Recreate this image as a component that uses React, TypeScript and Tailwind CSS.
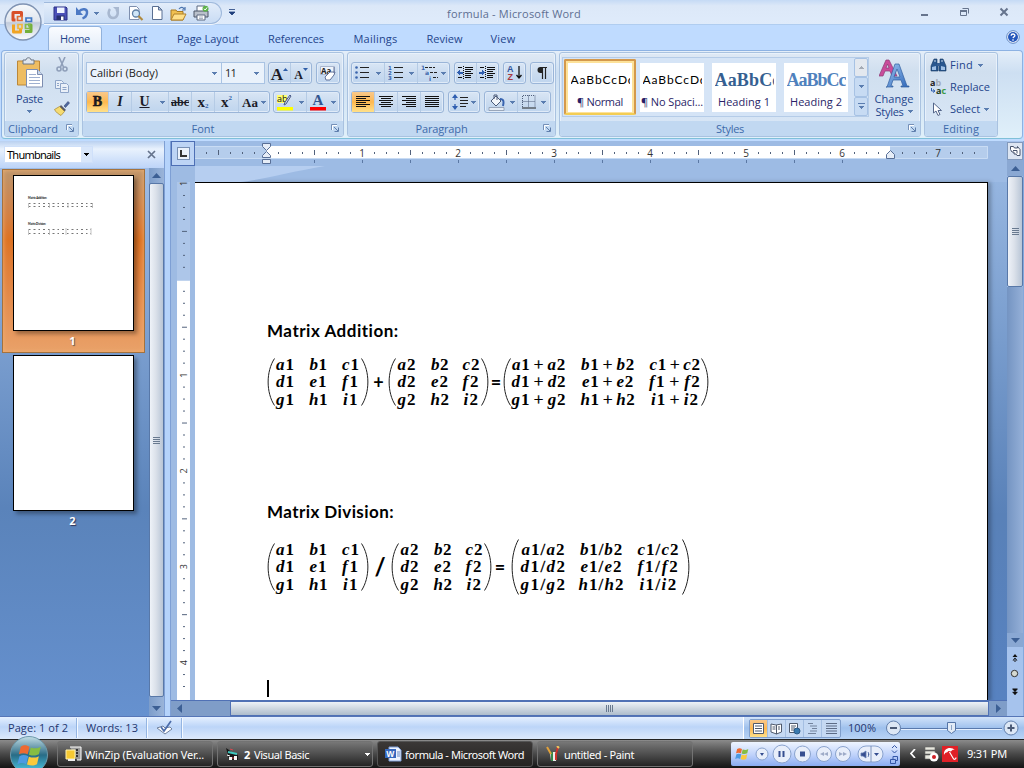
import React, { useLayoutEffect, useRef, useState } from "react";

const UI = "font-['Open_Sans','Noto_Sans',sans-serif]";
const TAHOMA = "font-['Noto_Sans','Open_Sans',sans-serif]";

/* Text run whose tracking is adjusted so that it spans a given width. */
function T({ w, c = "", children }: { w: number; c?: string; children: string }) {
  const ref = useRef<HTMLSpanElement>(null);
  const [ls, setLs] = useState(0);
  useLayoutEffect(() => {
    if (ref.current) setLs((w - ref.current.getBoundingClientRect().width) / children.length);
  }, []);
  return (
    <span ref={ref} className={`inline-block whitespace-pre ${c}`} style={{ letterSpacing: ls }}>
      {children}
    </span>
  );
}

function Down({ c = "#5a7db0", className = "" }: { c?: string; className?: string }) {
  return (
    <svg width="5" height="3" viewBox="0 0 5 3" className={`shrink-0 ${className}`} shapeRendering="crispEdges">
      <path d="M0 0h5v1h-1v1h-1v1h-1v-1h-1v-1h-1z" fill={c} />
    </svg>
  );
}

function Launcher() {
  return (
    <svg width="9" height="9" viewBox="0 0 9 9" fill="none">
      <path d="M.5 6V.5H6" stroke="#7590b8" />
      <path d="M3 3l4 4M7.5 3.5v4h-4" stroke="#5f7eac" />
      <path d="M1.5 6V1.5H6" stroke="#fff" />
    </svg>
  );
}

function Group({ w, label, lw, launch, shift = "pr-[4px]", children }: { w: string; label: string; lw: number; launch?: boolean; shift?: string; children: React.ReactNode }) {
  return (
    <div className={`${w} flex h-[85px] shrink-0 flex-col overflow-hidden rounded-[3px] border border-[#a9c2e0] bg-linear-to-b from-[#dfe9f5] via-[#d0dfef] via-[22%] to-[#d9e7f7] shadow-[inset_0_0_0_1px_#e8f1fb]`}>
      <div className="h-[68px]">{children}</div>
      <div className="flex h-[15px] items-center bg-[#c1d8f1] text-[11px] leading-none text-[#3e6aaa]">
        <div className={`flex-1 text-center ${launch ? shift : ""}`}>
          <T w={lw}>{label}</T>
        </div>
        {launch && <div className="mr-[3px]"><Launcher /></div>}
      </div>
    </div>
  );
}

const BOX = "flex h-[22px] shrink-0 items-stretch rounded-[3px] border border-[#9ab5d8] bg-linear-to-b from-[#d9e6f5] via-[#cbdcf0] via-[48%] to-[#bfd5ee] shadow-[inset_0_0_0_1px_#e0ebf8]";
const CELL = "flex items-center justify-center border-r border-[#b5cbe5] last:border-r-0";
const HOT = "bg-linear-to-b from-[#f9c88a] via-[#fdb84e] to-[#ffe18a]";

function Lines({ rows }: { rows: number[][] }) {
  return (
    <svg width="16" height="14" viewBox="0 0 16 14" shapeRendering="crispEdges">
      {rows.map(([x, w], i) => (
        <rect key={i} x={x} y={1 + i * 2} width={w} height="1" fill="#111" />
      ))}
    </svg>
  );
}

function SaveIcon() {
  return (
    <svg width="15" height="15" viewBox="0 0 15 15">
      <path d="M1 1h12l1 1v12H1z" fill="#4b50b8" stroke="#2b3085" />
      <path d="M4 1.5h7.5V7H4z" fill="#eef3ff" />
      <path d="M3.5 9.5h8V14h-8z" fill="#27306f" />
      <path d="M8 10.5h2.5V14H8z" fill="#fff" />
    </svg>
  );
}
function UndoIcon({ c, flip }: { c: string; flip?: boolean }) {
  return flip ? (
    <svg width="13" height="14" viewBox="0 0 13 14" fill="none">
      <path d="M3 3C.5 6 1.500 12 6 12s6-5.500 3.500-8.500" stroke={c} strokeWidth="2.600" />
      <path d="M6 1h6v6z" fill={c} />
    </svg>
  ) : (
    <svg width="13" height="14" viewBox="0 0 13 14" fill="none">
      <path d="M3 5.500C6 2 11.500 2.500 11 7c-.3 2.500-2 4.500-4.500 5.500" stroke={c} strokeWidth="2.400" />
      <path d="M0 1v8h7z" fill={c} />
    </svg>
  );
}
function PageIcon() {
  return (
    <svg width="12" height="14" viewBox="0 0 12 14">
      <path d="M1.500.5h6l3.500 3.500v9.500H1.500z" fill="#fff" stroke="#596f92" />
      <path d="M7.500.5V4H11z" fill="#b8c9e4" stroke="#596f92" />
    </svg>
  );
}
function PreviewIcon() {
  return (
    <svg width="16" height="15" viewBox="0 0 16 15">
      <path d="M1.500.5h7L11 3v10.500H1.500z" fill="#fff" stroke="#7e8fae" />
      <circle cx="8" cy="7.500" r="3.500" fill="#cfe6f8" stroke="#5e7fa5" strokeWidth="1.300" />
      <path d="M10.500 10l4 4" stroke="#b08a3e" strokeWidth="2.200" />
    </svg>
  );
}
function FolderIcon() {
  return (
    <svg width="17" height="15" viewBox="0 0 17 15">
      <path d="M1 4h5l1 1.500h6V14H1z" fill="#f0c050" stroke="#a87a24" />
      <path d="M1 14l3-6h12l-3 6z" fill="#ffe08a" stroke="#b0812b" />
      <path d="M9 3c2-2.500 4-2 5 0m1-2v3h-3" fill="none" stroke="#4a73ad" strokeWidth="1.200" />
    </svg>
  );
}
function PrintIcon() {
  return (
    <svg width="16" height="16" viewBox="0 0 16 16">
      <path d="M4 1h8v6H4z" fill="#fff" stroke="#5a6880" />
      <path d="M1 6h14v6H1z" fill="#b9c0cb" stroke="#4c5668" />
      <path d="M4 10h8v5H4z" fill="#fff" stroke="#5a6880" />
      <circle cx="12.500" cy="3.700" r="3" fill="#5db24b" />
      <path d="M11 3.700l1.200 1.300 2-2.600" fill="none" stroke="#fff" />
      <path d="M6 12h4M6 13.500h4" stroke="#8895aa" strokeWidth=".7" />
    </svg>
  );
}

function OfficeButton() {
  return (
    <svg width="42" height="42" viewBox="0 0 42 42" className="absolute left-[2px] top-px">
      <defs>
        <linearGradient id="orb" x1="0" y1="0" x2="0" y2="1">
          <stop offset="0" stopColor="#f8fafc" />
          <stop offset=".48" stopColor="#dfe5ee" />
          <stop offset=".52" stopColor="#c2ccdc" />
          <stop offset="1" stopColor="#fdfeff" />
        </linearGradient>
      </defs>
      <circle cx="21" cy="21" r="18" fill="url(#orb)" stroke="#7f93b3" strokeWidth="1.400" />
      <g fill="none" strokeWidth="3" strokeLinejoin="round">
        <path d="M13.500 19h-2.500v-7.500h8.500V16" stroke="#d8502a" />
        <path d="M11.500 23.500V31h7v-3.500" stroke="#f0a424" />
        <path d="M23 30.500h6v-6.500h-3" stroke="#74b03c" />
      </g>
      <g fill="none" strokeWidth="1.700">
        <path d="M15.500 15.500h4.500v4h-4.500z" stroke="#e06c34" />
        <path d="M24 17h5.500v3.500H24z" stroke="#3f78c4" />
        <path d="M16 23.500h4v4h-4z" stroke="#f3b63b" />
        <path d="M23.500 23.500h4v4h-4z" stroke="#86bb4c" />
      </g>
    </svg>
  );
}

function TitleBar() {
  return (
    <div className="flex h-6 items-center bg-linear-to-b from-[#c5daf5] via-[#dce8f8] via-[24%] to-[#dfebfb]">
      <div className="ml-[44px] mt-[2px] flex h-[22px] w-[178px] items-center rounded-r-full border border-l-0 border-[#9fb9dc] bg-linear-to-b from-[#e3edfa] to-[#c9dcf4] pl-[9px] shadow-[0_1px_0_#f2f7fd]">
        <div className="w-[23px]"><SaveIcon /></div>
        <div className="w-[18px]"><UndoIcon c="#4c79c4" /></div>
        <div className="w-[13px]"><Down /></div>
        <div className="w-[21px]"><UndoIcon c="#a8b8d0" flip /></div>
        <div className="w-[23px]"><PreviewIcon /></div>
        <div className="w-[19px]"><PageIcon /></div>
        <div className="w-[23px]"><FolderIcon /></div>
        <PrintIcon />
      </div>
      <svg width="6" height="6" viewBox="0 0 6 6" className="ml-[7px]"><path d="M0 .5h6M0 3h6L3 6z" stroke="#1f3f7c" strokeWidth=".8" fill="#1f3f7c" /></svg>
      <div className="ml-[212px] pt-[2px] text-[11px] leading-none text-[#5d6f92]">
        <T w={42}>formula</T>
        <T w={92}> - Microsoft Word</T>
      </div>
      <div className="ml-auto mr-[14px] flex items-center">
        <svg width="90" height="14" viewBox="0 0 90 14" fill="none" stroke="#66748d">
          <path d="M1 10h7" strokeWidth="2" />
          <path d="M42.500 3.500h6v5M40.500 5.500h6v5h-6z" />
          <path d="M40 6h7" strokeWidth="2" />
          <path d="M80.500 3.500l7 7M87.500 3.500l-7 7" strokeWidth="2" />
        </svg>
      </div>
    </div>
  );
}

function Tabs() {
  const tabs: [string, number, string][] = [
    ["Insert", 29, "w-[61px]"],
    ["Page Layout", 62, "w-[90px]"],
    ["References", 56, "w-[86px]"],
    ["Mailings", 44, "w-[73px]"],
    ["Review", 36, "w-[65px]"],
    ["View", 25, "w-[52px]"],
  ];
  return (
    <div className="flex h-[26px] items-end border-t border-[#b0cdf0] bg-[#bfdbff] text-[11px] text-[#24458c]">
      <div className="ml-[48px] flex h-[24px] w-[54px] items-center justify-center rounded-t-[4px] border border-b-0 border-[#92b2dc] bg-linear-to-b from-[#fafcff] to-[#e2ecf8]">
        <T w={30} c="leading-none">Home</T>
      </div>
      {tabs.map(([t, w, box]) => (
        <div key={t} className={`flex h-[24px] items-center justify-center ${box}`}>
          <T w={w} c="leading-none">{t}</T>
        </div>
      ))}
      <svg width="14" height="14" viewBox="0 0 14 14" className="mb-[6px] ml-auto mr-[4px]">
        <circle cx="7" cy="7" r="6.300" fill="#fff" stroke="#5b83c0" />
        <circle cx="7" cy="7" r="5" fill="#2557bb" />
        <path d="M5.200 5.800c0-2.500 3.800-2.300 3.700-.2 0 1.200-1.700 1.200-1.800 2.500M7 9.300v1.400" fill="none" stroke="#fff" strokeWidth="1.300" />
      </svg>
    </div>
  );
}

function Clipboard() {
  return (
    <div className="flex pt-[4px]">
      <div className="flex w-[49px] flex-col items-center text-[11px] text-[#24458c]">
        <svg width="28" height="32" viewBox="0 0 28 32">
          <path d="M1.500 4h22v24h-22z" fill="#eebd62" stroke="#bb8739" />
          <path d="M7 3h3c0-3 5-3 5 0h3v4H7z" fill="#dfe5ec" stroke="#6d7684" />
          <path d="M10.500 12.500h11l5 5V30h-16z" fill="#fff" stroke="#7d8db0" />
          <path d="M21.500 12.500v5h5" fill="#c9d7ec" stroke="#7d8db0" />
          <path d="M13 17.500h7M13 20.500h11M13 23.500h11M13 26.500h11" stroke="#9fb0d0" />
        </svg>
        <T w={27} c="mt-[2px] leading-[15px]">Paste</T>
        <Down className="mt-[4px]" />
      </div>
      <div className="flex flex-col items-center">
        <svg width="16" height="16" viewBox="0 0 16 16" fill="none" stroke="#8f9fb9" strokeWidth="1.600">
          <path d="M5 0l4.500 10M11 0L6.500 10" />
          <circle cx="5" cy="12" r="2" /><circle cx="11" cy="12" r="2" />
        </svg>
        <svg width="16" height="15" viewBox="0 0 16 15" className="mt-[6px]" fill="#eaf0f8" stroke="#8ea5c8">
          <path d="M1.500 1.500h6l2 2v6h-8z" /><path d="M6.500 4.500h6l2 2v7h-8z" />
          <path d="M3 4.500h2M3 6.500h2M8.500 8.500h4M8.500 10.500h4" />
        </svg>
        <svg width="16" height="15" viewBox="0 0 16 15" className="mt-[7px]">
          <path d="M10 5l4-4.500 1.500 1.500-4 4.500z" fill="#4e67a0" stroke="#35466f" strokeWidth=".6" />
          <path d="M7 4l5 5-2 1.500L5.500 6z" fill="#5b5b66" />
          <path d="M5.500 5.500l5 5L7 14.500C4.500 13 2 11.500.5 8.500z" fill="#f5db72" stroke="#a68428" strokeWidth=".7" />
        </svg>
      </div>
    </div>
  );
}

const SERIF = "font-['Liberation_Serif',serif] leading-none text-[#1c1c28]";

function FontGroup() {
  return (
    <div className="flex flex-col gap-[7px] pl-[3px] pt-[9px]">
      <div className="flex">
        <div className="flex h-[22px] w-[136px] items-center justify-between border border-[#a9c3e3] bg-[#eaf2fb] pl-[3px] pr-[4px] text-[11px] text-[#222]">
          <T w={68}>Calibri (Body)</T>
          <Down />
        </div>
        <div className="flex h-[22px] w-[43px] items-center justify-between border border-l-0 border-[#a9c3e3] bg-[#eaf2fb] pl-[3px] pr-[5px] text-[11px] text-[#222]">
          <T w={11}>11</T>
          <Down />
        </div>
        <div className={`${BOX} ml-[3px] w-[44px]`}>
          <div className={`${CELL} ${SERIF} w-[22px] text-[17px] font-bold`}><span className="pt-[3px]">A</span><svg width="5" height="3" className="mb-[8px]"><path d="M0 3h5L2.500 0z" fill="#2f5ea8" /></svg></div>
          <div className={`${CELL} ${SERIF} w-[20px] text-[12px] font-bold`}><span className="pt-1">A</span><svg width="5" height="3" className="mb-[8px]"><path d="M0 0h5L2.500 3z" fill="#2f5ea8" /></svg></div>
        </div>
        <div className={`${BOX} ml-[4px] w-[24px]`}>
          <svg width="22" height="20" viewBox="0 0 22 20">
            <path d="M3.500 3.500h14v8h-14z" fill="#eef3fa" stroke="#a9b7cf" />
            <text x="4" y="10.500" fontSize="8" fontWeight="bold" fontFamily="Open Sans" fill="#222">Aa</text>
            <path d="M8 14l5-5 5 0-1 3-4 5H9z" fill="#fff" stroke="#62729a" />
            <path d="M17 4v6" stroke="#62729a" />
          </svg>
        </div>
      </div>
      <div className="flex">
        <div className={`${BOX} w-[184px]`}>
          <div className={`${CELL} ${SERIF} ${HOT} w-[22px] text-[14px] font-bold [-webkit-text-stroke:0.5px_#111]`}>B</div>
          <div className={`${CELL} ${SERIF} w-[23px] text-[14px] font-bold italic`}>I</div>
          <div className={`${CELL} ${SERIF} w-[37px] gap-[10px] pl-[4px] text-[14px] font-bold`}><span className="underline">U</span><Down /></div>
          <div className={`${CELL} ${SERIF} w-[23px] text-[12px] font-bold line-through`}>abc</div>
          <div className={`${CELL} ${SERIF} w-[23px] text-[15px] font-bold`}>x<span className="pt-2 text-[7px] text-[#2f5ea8]">2</span></div>
          <div className={`${CELL} ${SERIF} w-[24px] text-[15px] font-bold`}>x<span className="pb-2 text-[7px] text-[#2f5ea8]">2</span></div>
          <div className={`${CELL} ${SERIF} w-[30px] gap-[3px] text-[13px] font-bold`}>Aa<Down /></div>
        </div>
        <div className={`${BOX} ml-[3px] w-[67px]`}>
          <div className={`${CELL} w-[33px] gap-[5px]`}>
            <svg width="18" height="18" viewBox="0 0 18 18">
              <path d="M1 2h10v8H1z" fill="#ffff70" />
              <text x="1" y="8.500" fontSize="9" fontFamily="Open Sans" fill="#111">ab</text>
              <path d="M15 3l-5 8-2 1 1-3 5-7z" fill="#cdd6ea" stroke="#4b5b88" />
              <path d="M1 14h16v3.500H1z" fill="#ff0" />
            </svg>
            <Down />
          </div>
          <div className={`${CELL} w-[32px] gap-[5px]`}>
            <svg width="16" height="18" viewBox="0 0 16 18">
              <text x="2.500" y="12" fontSize="15" fontWeight="bold" fontFamily="Liberation Serif" fill="#32558f">A</text>
              <path d="M0 14h16v3.500H0z" fill="#f00" />
            </svg>
            <Down />
          </div>
        </div>
      </div>
    </div>
  );
}

function ParaGroup() {
  const full = [0, 1, 2, 3, 4, 5];
  return (
    <div className="flex flex-col gap-[7px] pl-[3px] pt-[9px]">
      <div className="flex gap-[4px]">
        <div className={`${BOX} w-[99px]`}>
          <div className={`${CELL} w-[33px] gap-[5px]`}>
            <svg width="16" height="16" viewBox="0 0 16 16">
              <path d="M5 2.500h9M5 7.500h9M5 12.500h9" stroke="#222" />
              <circle cx="1.500" cy="2.500" r="1.300" fill="#3b65ac" /><circle cx="1.500" cy="7.500" r="1.300" fill="#3b65ac" /><circle cx="1.500" cy="12.500" r="1.300" fill="#3b65ac" />
            </svg>
            <Down />
          </div>
          <div className={`${CELL} w-[33px] gap-[5px]`}>
            <svg width="16" height="16" viewBox="0 0 16 16">
              <path d="M6 2.500h9M6 7.500h9M6 12.500h9" stroke="#222" />
              <g fontSize="5.500" fontWeight="bold" fontFamily="DejaVu Sans" fill="#3b65ac"><text x="0" y="4.500">1</text><text x="0" y="9.500">2</text><text x="0" y="14.500">3</text></g>
            </svg>
            <Down />
          </div>
          <div className={`${CELL} w-[31px] gap-[2px]`}>
            <svg width="18" height="16" viewBox="0 0 18 16">
              <path d="M4 2.500h10M9 7.500h8M12 12.500h5" stroke="#222" strokeDasharray="3 1" />
              <g fontSize="6" fontWeight="bold" fontFamily="DejaVu Sans" fill="#3b65ac"><text x="0" y="4.500">1</text><text x="4" y="10">a</text><text x="8" y="15.500">i</text></g>
            </svg>
            <Down />
          </div>
        </div>
        <div className={`${BOX} w-[45px]`}>
          {[0, 1].map((i) => (
            <div key={i} className={`${CELL} w-[22px]`}>
              <svg width="16" height="16" viewBox="0 0 16 16" shapeRendering="crispEdges">
                <path d="M1 2.500h4M8 2.500h8M8 4.500h8M8 6.500h6M8 8.500h8M8 10.500h6M1 12.500h4M8 12.500h6" stroke="#111" />
                <path d="M6.500 1v14" stroke="#111" strokeDasharray="1 1" />
                {i === 0 ? <path d="M0 7.500l3-3v2h3v2H3v2z" fill="#2f5eb0" /> : <path d="M6 7.500l-3-3v2H0v2h3v2z" fill="#2f5eb0" />}
              </svg>
            </div>
          ))}
        </div>
        <div className={`${BOX} w-[23px] justify-center`}>
          <svg width="18" height="20" viewBox="0 0 18 20">
            <g fontSize="9" fontWeight="bold" fontFamily="Liberation Sans"><text x="1" y="9" fill="#32559a">A</text><text x="1.500" y="17" fill="#aa3940">Z</text></g>
            <path d="M13 3v12M10.500 12l2.500 3 2.500-3" stroke="#111" fill="none" strokeWidth="1.300" />
          </svg>
        </div>
        <div className={`${BOX} w-[24px] justify-center`}>
          <svg width="14" height="20" viewBox="0 0 14 20"><path d="M12 4.500H5M7.500 4v12M10.500 4v12" fill="none" stroke="#222" strokeWidth="1.200" /><path d="M7.500 4H5.500a3 3 0 0 0 0 6h2z" fill="#222" /></svg>
        </div>
      </div>
      <div className="flex gap-[4px]">
        <div className={`${BOX} w-[93px]`}>
          <div className={`${CELL} ${HOT} w-[23px]`}><Lines rows={full.map((i) => [1, i % 2 ? 10 : 14])} /></div>
          <div className={`${CELL} w-[23px]`}><Lines rows={full.map((i) => (i % 2 ? [3, 10] : [1, 14]))} /></div>
          <div className={`${CELL} w-[23px]`}><Lines rows={full.map((i) => (i % 2 ? [5, 10] : [1, 14]))} /></div>
          <div className={`${CELL} w-[22px]`}><Lines rows={full.map(() => [1, 14])} /></div>
        </div>
        <div className={`${BOX} w-[32px]`}>
          <div className={`${CELL} w-[30px] gap-[2px]`}>
            <svg width="17" height="16" viewBox="0 0 17 16">
              <path d="M8 3.500h8M8 6.500h8M8 9.500h8M8 12.500h6" stroke="#222" />
              <path d="M3 1v5M3 10v5" stroke="#2f5eb0" strokeWidth="1.300" /><path d="M0 4l3-4 3 4zM0 12l3 4 3-4z" fill="#2f5eb0" />
            </svg>
            <Down />
          </div>
        </div>
        <div className={`${BOX} w-[67px]`}>
          <div className={`${CELL} w-[33px] gap-[5px]`}>
            <svg width="17" height="17" viewBox="0 0 17 17">
              <path d="M3 7l5-5 5 5-5 5z" fill="#f4f7fb" stroke="#4c5b78" /><path d="M6 5V1h3v5" fill="none" stroke="#4c5b78" />
              <path d="M12 5c4 0 4 3 3 7" fill="none" stroke="#3864b0" strokeWidth="2" /><path d="M1 13.500h15v3H1z" fill="#e6edf5" stroke="#8a97ab" strokeWidth=".8" />
            </svg>
            <Down />
          </div>
          <div className={`${CELL} w-[32px] gap-[5px]`}>
            <svg width="14" height="14" viewBox="0 0 14 14"><path d="M.5 12V.5H13M13 .5V12M6.500.5V12M.5 6.500H13" fill="none" stroke="#4f5f7c" strokeDasharray="1 1" /><path d="M0 13h14" stroke="#222" /></svg>
            <Down />
          </div>
        </div>
      </div>
    </div>
  );
}

function StyleCard({ sample, name, heading, hot, nw, sw, color }: { sample: string; name: string; heading?: boolean; hot?: boolean; nw: number; sw: number; color?: string }) {
  return (
    <div className={`flex h-[56px] w-[72px] shrink-0 items-center justify-center rounded-[2px] ${hot ? "border-2 border-[#d4994c] border-b-[#f3cd54] bg-[#fde29a]" : ""}`}>
      <div className="flex h-[49px] w-[64px] flex-col items-center overflow-hidden bg-white">
        <div className={`mt-[8px] h-[17px] w-[59px] overflow-hidden whitespace-nowrap leading-[18px] ${heading ? "font-['Liberation_Serif',serif] text-[18px] font-bold" : "font-['Lato',sans-serif] text-[12px] text-black"} ${color ?? ""}`}>
          <T w={sw}>{sample}</T>
        </div>
        <T w={nw} c="mt-[6px] text-[11px] leading-[15px] text-[#2a1f68]">{name}</T>
      </div>
    </div>
  );
}

function StylesGroup() {
  return (
    <div className="flex pl-[2px] pt-[4px]">
      <div className="flex h-[60px] w-[307px] items-center border border-[#b5cce8] bg-[#d5e4f6] pl-[1px]">
        <StyleCard sample="AaBbCcDd" name="¶ Normal" hot nw={46} sw={65} />
        <StyleCard sample="AaBbCcDd" name="¶ No Spaci..." nw={62} sw={65} />
        <StyleCard sample="AaBbCc" name="Heading 1" heading nw={52} sw={66} color="text-[#365f91]" />
        <StyleCard sample="AaBbCc" name="Heading 2" heading nw={52} sw={59} color="text-[#4f81bd]" />
        <div className="ml-[2px] flex h-[58px] w-[14px] flex-col">
          {[0, 1, 2].map((i) => (
            <div key={i} className={`flex flex-1 flex-col items-center justify-center gap-[2px] rounded-[2px] border border-[#a7c2e4] ${i ? "bg-[#c7dbf3]" : "bg-[#e3e8ef]"}`}>
              {i === 2 && <div className="h-px w-[7px] bg-[#5a7db0]" />}
              <Down c={i ? "#5a7db0" : "#a5abb5"} className={i ? "" : "rotate-180"} />
            </div>
          ))}
        </div>
      </div>
      <div className="flex w-[50px] flex-col items-center pt-[2px] text-[11px] text-[#24458c]">
        <svg width="31" height="31" viewBox="0 0 31 31">
          <defs><linearGradient id="aa" x1="0" y1="0" x2="1" y2="1"><stop offset="0" stopColor="#9cc4f2" /><stop offset="1" stopColor="#2f67b9" /></linearGradient></defs>
          <path fillRule="evenodd" d="M0 17L7 1h3l8 16h-5l-2-5H6l-2 5zM7 9h3L8.500 5z" fill="#c94c9b" stroke="#8d3974" strokeWidth=".7" />
          <path fillRule="evenodd" d="M7 28h1l8-23h4l8 22h2v1h-8v-1h2l-2-6h-8l-2 6h2v1zM15 18h6l-3-8z" fill="url(#aa)" stroke="#315f9f" strokeWidth=".7" />
        </svg>
        <T w={39} c="mt-[2px] leading-[13px]">Change</T>
        <div className="flex items-center gap-[4px]"><T w={28} c="leading-[13px]">Styles</T><Down /></div>
      </div>
    </div>
  );
}

function EditingGroup() {
  return (
    <div className="flex flex-col pl-[5px] pt-px text-[11px] text-[#24458c]">
      <div className="flex h-[22px] items-center">
        <svg width="17" height="15" viewBox="0 0 17 15" className="mr-[3px]">
          <path d="M4 1h3v5l1 1v6H1V8zM10 1h3l3 7v5H9V7l1-1z" fill="#29578f" stroke="#183961" strokeWidth=".6" />
          <path d="M2 9l4-1v4H2zM11 8l4 1v3h-4z" fill="#9fc0e6" /><path d="M7 5h3v3H7z" fill="#345d92" /><path d="M4 3h2M11 3h2" stroke="#cde" />
        </svg>
        <T w={23}>Find</T><Down className="ml-[5px]" />
      </div>
      <div className="flex h-[22px] items-center">
        <svg width="17" height="16" viewBox="0 0 17 16" className="mr-[3px]">
          <g fontSize="9" fontWeight="bold" fontFamily="Open Sans"><text x="0" y="6.500"><tspan fill="#222">a</tspan><tspan fill="#a3abb8">b</tspan></text><text x="6" y="14.500"><tspan fill="#1d3d22">a</tspan><tspan fill="#3d9a46">c</tspan></text></g>
          <path d="M1.500 9v3h3M3 10.500L5 12l-2 1.500" fill="none" stroke="#2f5eb0" />
        </svg>
        <T w={40}>Replace</T>
      </div>
      <div className="flex h-[22px] items-center">
        <svg width="17" height="15" viewBox="0 0 17 15" className="mr-[3px]"><path d="M3.500 1v10l2.500-2 2 4.500 2-1-2-4h3.500z" fill="#fff" stroke="#55678b" /></svg>
        <T w={30}>Select</T><Down className="ml-[4px]" />
      </div>
    </div>
  );
}

function Ribbon() {
  return (
    <div className="h-[91px] bg-[#bfdbff] px-px pb-[1px]">
      <div className="flex h-[89px] gap-[3px] rounded-[4px] border border-[#8db2e3] border-b-[#7fc0d8] bg-linear-to-b from-[#e4eef9] via-[#cddff2] via-[25%] to-[#e0f0fa] pl-[2px] pt-px">
        <Group w="w-[75px]" label="Clipboard" lw={50} launch shift="pr-[5px]"><Clipboard /></Group>
        <Group w="w-[262px]" label="Font" lw={23} launch shift="pr-[8px]"><FontGroup /></Group>
        <Group w="w-[209px]" label="Paragraph" lw={52} launch shift="pr-[8px]"><ParaGroup /></Group>
        <Group w="w-[362px]" label="Styles" lw={28} launch shift="pr-[8px]"><StylesGroup /></Group>
        <Group w="w-[74px]" label="Editing" lw={36}><EditingGroup /></Group>
      </div>
    </div>
  );
}

function Arrow({ dir, c = "#3c5f94" }: { dir: "up" | "down" | "left" | "right"; c?: string }) {
  const d = { up: "M0 7h9L4.500 2z", down: "M0 2h9L4.500 7z", left: "M7 0v9L2 4.500z", right: "M2 0v9l5-4.500z" }[dir];
  return <svg width="9" height="9" viewBox="0 0 9 9"><path d={d} fill={c} /></svg>;
}

const VTHUMB = "flex items-center justify-center rounded-[2px] border border-[#5878a8] bg-linear-to-r from-[#eef2f8] via-[#dbe1ea] via-[45%] to-[#b8c5d6]";
const PAPER = "border border-black bg-white shadow-[3px_3px_4px_#0005]";

function MiniLines() {
  return (
    <svg width="119" height="60" viewBox="0 0 119 60" className="block">
      <g fontFamily="Lato" fontWeight="bold" fontSize="2.700" fill="#000"><text x="14" y="23" textLength="19">Matrix Addition:</text><text x="14" y="49" textLength="18">Matrix Division:</text></g>
      <g stroke="#777" strokeWidth="1" strokeDasharray="1.500 3 2 3">
        <path d="M15 27.500h64M15 30.500h64" />
        <path d="M15 53.500h62M15 57.500h62" />
      </g>
      <g stroke="#aaa" strokeWidth=".7"><path d="M14.500 27v5M35.500 27v5M54 27v5M78.500 27v5M14.500 53v6M35.500 53v6M52 52v7M77 52v7" /></g>
    </svg>
  );
}

function Thumbnails() {
  return (
    <div className="flex h-full w-[164px] flex-col">
      <div className="flex h-[27px] items-center bg-linear-to-b from-[#b9d0f0] via-[#e9f2fd] via-[30%] to-[#bdd4f8] pl-[4px] text-[11px]">
        <div className={`${TAHOMA} flex h-[17px] w-[89px] items-center justify-between border border-[#cfe0fa] bg-white pb-px pl-[2px] text-black`}>
          <T w={53} c="leading-none">Thumbnails</T>
          <div className="flex h-[15px] w-[11px] items-center justify-center bg-[#d8e6fa]"><Down c="#000" /></div>
        </div>
        <svg width="9" height="9" viewBox="0 0 9 9" className="ml-[54px]"><path d="M1 1l7 7M8 1L1 8" stroke="#65738c" strokeWidth="1.700" /></svg>
      </div>
      <div className="flex flex-1">
        <div className={`${UI} w-[149px] bg-linear-to-b from-[#9ebce6] via-[#5a83ba] via-[62%] to-[#6691cf] pl-[2px] pt-px text-center text-[11px] font-bold text-white`}>
          <div className="h-[184px] w-[143px] border border-[#a4723e] bg-linear-to-b from-[#bc946b] via-[#dd7222] via-[38%] to-[#e9a169] pl-[10px] pt-[5px] shadow-[inset_0_0_5px_#f0b070]">
            <div className={`${PAPER} h-[156px] w-[121px]`}><MiniLines /></div>
            <div className="w-[119px] pt-[4px] leading-[12px] [text-shadow:1px_1px_1px_#555]">1</div>
          </div>
          <div className={`${PAPER} ml-[11px] mt-[2px] h-[156px] w-[121px]`} />
          <div className="ml-[11px] w-[119px] pt-[4px] leading-[12px] [text-shadow:1px_1px_1px_#335]">2</div>
        </div>
        <div className="flex w-[15px] flex-col bg-linear-to-r from-[#7d9dca] to-[#9ab4d9]">
          <div className="flex h-[15px] items-center justify-center"><Arrow dir="up" /></div>
          <div className={`${VTHUMB} h-[514px]`}>
            <div className="flex flex-col gap-px">{[0, 1, 2, 3].map((i) => <div key={i} className="h-px w-[7px] bg-[#68798f]" />)}</div>
          </div>
          <div className="flex flex-1 items-center justify-center pt-1"><Arrow dir="down" /></div>
        </div>
      </div>
    </div>
  );
}

function HRuler() {
  const ticks: React.ReactNode[] = [];
  for (let i = -5; i <= 59; i++) {
    const x = 71.5 + i * 12;
    if (i === 0 || i === 52) continue;
    if (i % 8 === 0) ticks.push(<text key={i} x={x - 0.5} y="10.500" fontSize="10" textAnchor="middle" fontFamily="Open Sans" fill="#333">{i / 8}</text>);
    else ticks.push(<path key={i} d={i % 4 === 0 ? `M${x} 4v5` : `M${x} 6v2`} stroke="#52627c" />);
  }
  return (
    <svg width="793" height="24" viewBox="0 -5 793 24" className="block">
      <path d="M0 0h793v12H0z" fill="#b5cdec" /><path d="M0 .5h792.500v12H0" fill="none" stroke="#c9dcf4" />
      <path d="M71 0h624v12H71z" fill="#fff" />
      {ticks}
      {Array.from({ length: 12 }, (_, i) => <path key={i} d={`M${119.500 + i * 48} 14v3`} stroke="#5b78a4" />)}
      <g fill="#e6edf7" stroke="#586f97">
        <path d="M67.500-2.500h8v3l-4 4-4-4zM67.500 11.500v-2l4-4 4 4v2zM67.500 13.500h8v4h-8z" />
        <path d="M691.500 12.500v-4l4-4 4 4v4z" />
      </g>
    </svg>
  );
}

function VRuler() {
  const ticks: React.ReactNode[] = [];
  for (let i = -8; i <= 34; i++) {
    const y = 97.5 + i * 12;
    if (i === 0) continue;
    if (i % 8 === 0) ticks.push(<text key={i} transform={`translate(10 ${y}) rotate(-90)`} fontSize="9" textAnchor="middle" fontFamily="Open Sans" fill="#333">{Math.abs(i / 8)}</text>);
    else ticks.push(<path key={i} d={i % 4 === 0 ? `M5 ${y}h5` : `M6 ${y}h2`} stroke="#52627c" />);
  }
  return (
    <svg width="13" height="519" viewBox="0 0 13 519" className="ml-[6px] mt-[16px] block">
      <path d="M0 0h13v519H0z" fill="#fff" /><path d="M0 0h13v99H0z" fill="#adc6e9" />{ticks}
    </svg>
  );
}

function Paren({ h, right }: { h: number; right?: boolean }) {
  return (
    <svg width="8" height={h} viewBox={`0 0 8 ${h}`} className={`shrink-0 ${right ? "-scale-x-100" : ""}`}>
      <path d={`M7.500 .5C-1 ${h * 0.28} -1 ${h * 0.72} 7.500 ${h - 0.5}`} fill="none" stroke="#222" />
    </svg>
  );
}

function Matrix({ cols, cells, w, h = 48 }: { cols: string; cells: string[]; w: number[]; h?: number }) {
  return (
    <div className="flex items-center">
      <Paren h={h} />
      <div className={`grid ${cols} auto-rows-[17.5px] font-['Liberation_Serif',serif] text-[17px] font-bold leading-[18px] text-black`}>
        {cells.map((s, i) => (
          <div key={i} className="flex justify-center">
            <MathRun s={s} w={w[i]} />
          </div>
        ))}
      </div>
      <Paren h={h} right />
    </div>
  );
}

/* Variables are slanted, digits and operators stay upright. */
function MathRun({ s, w }: { s: string; w: number }) {
  const ref = useRef<HTMLSpanElement>(null);
  const [ls, setLs] = useState(0);
  useLayoutEffect(() => {
    if (ref.current) setLs((w - ref.current.getBoundingClientRect().width) / s.length);
  }, []);
  return (
    <span ref={ref} className="whitespace-pre" style={{ letterSpacing: ls }}>
      {s.split("").map((ch, i) => <span key={i} className={/[a-z]/.test(ch) ? "italic" : ch === " " ? "text-[10px]" : ch === "/" || ch === "+" ? "font-normal [-webkit-text-stroke:0.4px_#000]" : ""}>{ch}</span>)}
    </span>
  );
}

const one = ["a1", "b1", "c1", "d1", "e1", "f1", "g1", "h1", "i1"];
const two = one.map((s) => s[0] + "2");
const w1 = [19, 18, 18, 19, 18, 18, 19, 19, 16];
const wSum = [54, 54, 51, 55, 52, 52, 55, 55, 48];
const wDiv = [44, 43, 42, 46, 42, 42, 46, 46, 38];
const LATO = "font-['Lato',sans-serif] font-bold text-black";

function Page() {
  return (
    <div className="h-[519px] w-[793px] overflow-hidden border-r border-t border-black bg-white pl-[72px] shadow-[3px_0_4px_#0004]">
      <div className={`${LATO} mt-[138px] h-[20px] text-[17px] leading-[20px]`}><T w={132}>Matrix Addition:</T></div>
      <div className="mt-[17px] flex h-[48px] items-center">
        <Matrix cols="grid-cols-[21px_45px_20px]" cells={one} w={w1} />
        <div className={`${LATO} w-[19px] text-center text-[18px]`}>+</div>
        <Matrix cols="grid-cols-[22px_44px_19px]" cells={two} w={w1} />
        <div className={`${LATO} w-[14px] text-center text-[18px]`}>=</div>
        <Matrix cols="grid-cols-[56px_82px_52px]" cells={one.map((s, i) => `${s} + ${two[i]}`)} w={wSum} />
      </div>
      <div className={`${LATO} mt-[96px] h-[20px] text-[17px] leading-[20px]`}><T w={127}>Matrix Division:</T></div>
      <div className="mt-[17px] flex h-[56px] items-center">
        <Matrix cols="grid-cols-[21px_45px_20px]" cells={one} w={w1} />
        <div className={`${LATO} w-[22px] text-center text-[24px]`}>/</div>
        <Matrix cols="grid-cols-[22px_44px_19px]" cells={two} w={w1} />
        <div className={`${LATO} w-[19px] pr-[3px] text-center text-[18px]`}>=</div>
        <Matrix cols="grid-cols-[49px_67px_47px]" cells={one.map((s, i) => `${s}/${two[i]}`)} w={wDiv} h={56} />
      </div>
      <div className="mt-[85px] h-[17px] w-[2px] bg-black" />
    </div>
  );
}

function Document() {
  return (
    <div className="flex h-full flex-1 bg-linear-to-b from-[#9dbce5] via-[#5981b8] via-[65%] to-[#5782c1]">
      <div className="flex w-[836px] flex-col">
        <div className="flex h-[559px]">
          <div className="flex w-[24px] flex-col overflow-hidden bg-[#9ebbe3]">
            <div className="flex h-[25px] shrink-0 items-center justify-center border border-[#4d6fb5] bg-[#bdd4f5]">
              <div className="flex h-[13px] w-[13px] items-center justify-center border border-[#7890b5] bg-[#eaf1fb]">
                <svg width="7" height="7"><path d="M1 0v6h6" fill="none" stroke="#333" strokeWidth="2" /></svg>
              </div>
            </div>
            <VRuler />
          </div>
          <div className="w-[812px] overflow-hidden">
            <div className="h-[41px] bg-[#9dbbe4]">
              <HRuler />
              <svg width="150" height="17" className="block"><path d="M0 1h130C95 7 60 16 45 17H0z" fill="#b6cef0" /></svg>
            </div>
            <Page />
          </div>
        </div>
        <div className="flex flex-1 border-t border-[#5071b5] bg-[#7f9dc8]">
          <div className="flex w-[59px] items-center pl-[4px]"><Arrow dir="left" /></div>
          <div className="flex w-[759px] items-center justify-center gap-px border border-[#5071b5] bg-linear-to-b from-[#edf2f7] via-[#d4dce5] via-[40%] to-[#aebdcc]">
            {[0, 1, 2, 3].map((i) => <div key={i} className="h-[7px] w-px bg-[#68798f]" />)}
          </div>
          <div className="flex flex-1 items-center justify-center"><Arrow dir="right" /></div>
        </div>
      </div>
      <div className="flex w-[17px] flex-col border-r border-[#83a8dc] bg-[#a6c3ed]">
        <div className="mt-px flex h-[18px] items-center justify-center border border-[#8299bb] bg-[#dce5f2]">
          <svg width="12" height="12" viewBox="0 0 12 12" fill="#fff" stroke="#46536c"><path d="M1.500 4.500v-3h3l1 1.500h3v-1.500l2.500 3v6h-3l-1-1.500h-2v-2h-2z" /><path d="M4 5.500h4v3" /></svg>
        </div>
        <div className="flex h-[16px] items-center justify-center bg-[#8aa8d3]"><Arrow dir="up" /></div>
        <div className={`${VTHUMB} h-[111px]`}><div className="flex flex-col gap-px">{[0, 1, 2, 3].map((i) => <div key={i} className="h-px w-[7px] bg-[#68798f]" />)}</div></div>
        <div className="flex-1 bg-linear-to-r from-[#7494c2] to-[#95b0d8]" />
        <div className="flex h-[14px] items-center justify-center bg-[#8aa8d3]"><Arrow dir="down" /></div>
        <svg width="16" height="69" viewBox="0 0 16 69">
          <path d="M5.500 10h5L8 7zM5.500 13.500h5L8 10.500zM7 12.500h2v2H7z" fill="#111" />
          <circle cx="7.500" cy="26.500" r="3.200" fill="#d5d9d1" stroke="#333" />
          <path d="M5.500 42h5l-2.500 3zM5.500 45h5l-2.500 3zM5.500 41.500h5" fill="#111" stroke="#111" strokeWidth=".4" />
        </svg>
      </div>
    </div>
  );
}

function StatusBar() {
  const sep = "h-[20px] w-px bg-[#94b5e2] shadow-[1px_0_0_#f4f9ff]";
  return (
    <div className="flex h-[23px] items-center border-t border-[#5676b7] bg-linear-to-b from-[#e5f0ff] via-[#bcd5f8] via-[45%] to-[#dce9fb] text-[11px] leading-none text-[#24366e]">
      <div className="w-[76px] pb-[2px] pl-[8px]"><T w={60}>Page: 1 of 2</T></div>
      <div className={sep} />
      <div className="w-[69px] pb-[2px] pl-[9px]"><T w={52}>Words: 13</T></div>
      <div className={sep} />
      <div className="flex w-[34px] justify-center">
        <svg width="17" height="16" viewBox="0 0 17 16"><path d="M1 8l6-2 2 2 5-1 2 2-7 5z" fill="#fff" stroke="#6f819f" /><path d="M5 7l3 4 7-10" fill="none" stroke="#4c6dab" strokeWidth="1.700" /></svg>
      </div>
      <div className={sep} />
      <div className="ml-auto flex h-full w-[281px] items-center border-l border-white bg-linear-to-b from-[#d2e3f9] via-[#9fc1ed] via-[50%] to-[#b8d3f5] pl-[5px]">
        <div className="flex h-[19px] w-[92px] rounded-[2px] border border-[#7f9ecb] bg-[#c5d9f3]">
          {[0, 1, 2, 3, 4].map((i) => (
            <div key={i} className={`flex w-[18px] items-center justify-center border-r border-[#a5bfe2] last:border-0 ${i === 0 ? HOT : ""}`}>
              <svg width="13" height="13" viewBox="0 0 13 13" fill="none" stroke="#4f5a6d">
                {i === 0 && <><path d="M1.500 1.500h10v10h-10z" fill="#fff" /><path d="M3 4h7M3 6.500h7M3 9h7" /></>}
                {i === 1 && <><path d="M1 2l5 1 5.500-1v8L6.500 12 1 10zM6.500 3v9" fill="#fff" /><path d="M2.500 5h3M2.500 7h3M8 5h2M8 7h2" /></>}
                {i === 2 && <><path d="M1.500 1.500h8v9h-8z" fill="#fff" /><path d="M3 4h5M3 6h4M3 8h3" /><circle cx="9" cy="9" r="3" fill="#3879ae" stroke="#2b5b88" /></>}
                {i === 3 && <path d="M2 1.500h5M4 4h7M6 6.500h5M4 9h7M2 11.500h8" stroke="#73839d" />}
                {i === 4 && <path d="M1 1.500h11M1 4h11M1 6.500h11M1 9h11M1 11.500h11" stroke="#5c6b85" />}
              </svg>
            </div>
          ))}
        </div>
        <T w={28} c="ml-[7px] mb-px">100%</T>
        <svg width="135" height="20" viewBox="0 0 135 20" className="ml-[8px]" fill="none">
          <path d="M17 10.500h101" stroke="#5979ac" /><path d="M17 11.500h101" stroke="#e5f0ff" />
          <circle cx="9.500" cy="10" r="7" fill="#dce7f5" stroke="#6380ad" /><path d="M6 10h7" stroke="#4b5a76" strokeWidth="2" />
          <path d="M63.500 4.500h8v8l-4 3-4-3z" fill="#e2ebf6" stroke="#5575a6" /><path d="M67.500 7v5" stroke="#8ba3c5" />
          <circle cx="127" cy="10" r="7" fill="#dce7f5" stroke="#6380ad" /><path d="M123.500 10h7M127 6.500v7" stroke="#4b5a76" strokeWidth="2" />
        </svg>
      </div>
    </div>
  );
}

function Flag({ className = "", size = 20 }: { className?: string; size?: number }) {
  return (
    <svg width={size} height={size} viewBox="0 0 20 20" className={className}>
      <path d="M3 3c3-2 5-1 7 0L8.500 9C6 8 4 8 1.500 9z" fill="#ee6a32" /><path d="M11 3.500c3 1 5 1 8-.5l-1.500 6c-3 1.500-5 1.300-8 .3z" fill="#86bd43" />
      <path d="M1.200 10.500c2.500-1.500 5-1 7 0L6.500 17c-2-1-4-1.500-7 0z" fill="#4c9ae2" transform="translate(.8 0)" /><path d="M9.500 11c3 1 5 1 8-.5L16 17c-3 1.500-5 1.200-8 .2z" fill="#fbc93c" />
    </svg>
  );
}

function Task({ children, active }: { children: React.ReactNode; active?: boolean }) {
  return (
    <div className={`mr-[4px] flex h-[26px] w-[156px] shrink-0 items-center rounded-[3px] border pl-[7px] ${active ? "border-[#555] bg-linear-to-b from-[#3b3837] to-[#252321]" : "border-[#737373] bg-linear-to-b from-[#777] via-[#505050] via-[48%] to-[#252525]"}`}>
      {children}
    </div>
  );
}

function Taskbar() {
  return (
    <div className={`${TAHOMA} relative flex h-[29px] items-center border-t border-[#222] bg-linear-to-b from-[#8b8b8b] via-[#4a4a4a] via-[48%] to-[#151515] pl-[57px] text-[11px] leading-none text-white`}>
      <div className="absolute left-[10px] top-[-4px] flex h-[38px] w-[38px] items-center justify-center overflow-hidden rounded-full border border-[#6d9aab] bg-linear-to-b from-[#c0dce4] via-[#286c86] via-[50%] to-[#4dd0ee]"><Flag size={25} /></div>
      <Task>
        <svg width="17" height="16" viewBox="0 0 17 16" className="mr-[3px]"><path d="M5 1h11v13h-4" fill="#999" stroke="#fff" /><path d="M1 4h9v9H1z" fill="#f6c932" stroke="#fff3b0" /><path d="M12 3v9" stroke="#333" strokeWidth="2" strokeDasharray="2 1" /><path d="M3 13h7v2H3z" fill="#eee" /></svg>
        <T w={119}>WinZip (Evaluation Ver...</T>
      </Task>
      <Task>
        <svg width="16" height="16" viewBox="0 0 16 16" className="mr-[3px]"><path d="M1 2l3 2 3 3 6 2v5H4l-1-5z" fill="#161616" /><path d="M3 6l9 2" stroke="#3ec8c0" strokeWidth="2" /><path d="M4 11h3v3H4zM9 10h3v4H9z" fill="#f5f5f5" /><path d="M5 3l3 1M7 12h2" stroke="#d84850" /><path d="M2 9l3 1" stroke="#fff" /></svg>
        <T w={9} c="font-bold">2</T>
        <T w={55} c="ml-[1px]">Visual Basic</T>
        <Down c="#fff" className="ml-auto mr-[2px]" />
      </Task>
      <Task active>
        <svg width="17" height="16" viewBox="0 0 17 16" className="mr-[3px]"><path d="M4 1h9l3 3v11H4z" fill="#edf3ff" stroke="#7e9ed8" /><path d="M0 3h11v9H0z" fill="#3568be" /><text x="1.200" y="10.500" fontSize="8.500" fontWeight="bold" fontFamily="Liberation Sans" fill="#fff">W</text><path d="M12 6h3M12 8h3M12 10h3" stroke="#6a8ac4" /></svg>
        <T w={119}>formula - Microsoft Word</T>
      </Task>
      <Task>
        <svg width="16" height="16" viewBox="0 0 16 16" className="mr-[3px]"><path d="M5 6h7l-1 9H6z" fill="#eee" /><path d="M7 6v9" stroke="#37884a" strokeWidth="2" /><path d="M2 1l4 7" stroke="#e2a13a" strokeWidth="2" /><path d="M13 1l-2 7v6" stroke="#cf322d" strokeWidth="2" /><path d="M12 0l2 2" stroke="#f2c45b" strokeWidth="2" /></svg>
        <T w={70}>untitled - Paint</T>
      </Task>
      <div className="ml-[34px] flex h-[24px] w-[169px] shrink-0 items-center rounded-[2px] bg-linear-to-b from-[#eff5ff] via-[#bed1fa] via-[55%] to-[#8aacf2]">
        <Flag size={14} className="ml-[4px]" />
        <svg width="150" height="24" viewBox="0 0 150 24">
          <g fill="#e8eefa" stroke="#8aa3ce">
            <circle cx="13" cy="12" r="6" /><circle cx="33" cy="12" r="9" /><circle cx="53.500" cy="12" r="8" /><circle cx="75" cy="12" r="7.500" /><circle cx="94" cy="12" r="7.500" /><rect x="109" y="4" width="25" height="16" rx="8" />
          </g>
          <path d="M11 11h4l-2 3zM29.500 9h2v6h-2zM33.500 9h2v6h-2zM51 9.500h5v5h-5zM125 11h5l-2.500 3z" fill="#364e90" />
          <path d="M75 10v4l-4-2zM79 10v4l-4-2zM90 10v4l4-2zM94 10v4l4-2z" fill="#9eabc8" />
          <path d="M112 11h2l3-2v7l-3-2h-2zM119 10q2 2 0 5M122 4v16" fill="#364e90" stroke="#657db0" strokeWidth=".8" />
          <path d="M143 6l2.500-2.500L148 6M143 8.500l2.500 2.500L148 8.500M141.500 17.500h5v4h-5zM144 17v-2.500h4.500v4H147" fill="none" stroke="#3557a8" />
        </svg>
      </div>
      <svg width="6" height="9" viewBox="0 0 6 9" className="ml-[10px] mb-[2px]"><path d="M5 0L1 4.500 5 9" fill="none" stroke="#fff" strokeWidth="1.700" /></svg>
      <svg width="34" height="18" viewBox="0 0 34 18" className="ml-[8px]">
        <path d="M1 2h10v3H1zM1 6h10v3H1zM1 10h8v4H1z" fill="#e8e8df" stroke="#666" strokeWidth=".6" /><circle cx="10" cy="12" r="4.500" fill="#fff" /><circle cx="10" cy="12" r="2" fill="#cf1f25" />
        <path d="M18 1h16v16H18z" fill="#e02027" />
        <path d="M20 10C19 3 27 1 31 5c-2-.5-3 0-4 1.500-2-1-3-.5-4 1-1.500 0-2 .5-3 2.500z" fill="#fff" /><path d="M25.500 7l3.500 6c1 2 3 1.500 3-.5" fill="none" stroke="#fff" strokeWidth="1.200" />
      </svg>
      <T w={40} c="ml-[9px] mb-px">9:31 PM</T>
    </div>
  );
}

export default function App() {
  return (
    <div className={`${UI} flex h-[768px] w-[1024px] flex-col overflow-hidden bg-[#bfdbff]`}>
      <div className="relative shrink-0">
        <TitleBar />
        <Tabs />
        <OfficeButton />
      </div>
      <Ribbon />
      <div className="flex h-[575px] shrink-0">
        <Thumbnails />
        <div className="w-[7px] shrink-0 border-x border-[#7e9fd4] bg-[#b5d3fb]" />
        <Document />
      </div>
      <StatusBar />
      <Taskbar />
    </div>
  );
}
